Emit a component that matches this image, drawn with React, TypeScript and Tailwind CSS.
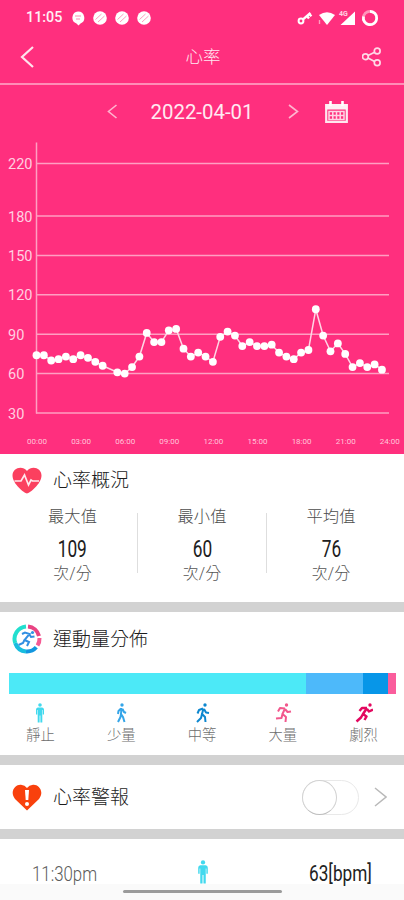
import type { ReactNode } from "react";

interface Level {
  name: string;
  color: string;
  limbs: string;
  head: [number, number];
}

// one reading every half hour, null = no reading
const READINGS: (number | null)[] = [
  74, 74, 70, 71, 73, 71, 74, 72, 69, 66, null, 61, 60, 65, 73, 91, 84, 84, 93,
  94, 79, 73, 76, 73, 69, 88, 92, 89, 81, 84, 81, 81, 82, 76, 73, 71, 76, 78,
  109, 89, 77, 83, 75, 65, 68, 65, 67, 63,
];

const TICKS = [220, 180, 150, 120, 90, 60, 30];

const HOURS = [
  "00:00",
  "03:00",
  "06:00",
  "09:00",
  "12:00",
  "15:00",
  "18:00",
  "21:00",
  "24:00",
];

const STATS = [
  { name: "最大值", value: 109 },
  { name: "最小值", value: 60 },
  { name: "平均值", value: 76 },
];

const LEVELS: Level[] = [
  {
    name: "少量",
    color: "#35a5e8",
    head: [10, 2],
    limbs: "M9.5 5 L9 11 L11 14 L12.5 19 M9 11 L8.5 14 L6 19 M9 5.5 L6.5 8 L6 11 M10.5 6 L12 9 L14 10",
  },
  {
    name: "中等",
    color: "#0d87cf",
    head: [12, 2],
    limbs: "M10.5 5.5 L9 11 L12 14 L12.5 19 M9 11 L8 15 L4 19 M10 5.5 L6 7 L4.5 10.5 M11 6 L13 9.5 L16 10",
  },
  {
    name: "大量",
    color: "#f2588d",
    head: [12.5, 2],
    limbs: "M11 5.5 L8.5 11 L12 14 L11.5 19 M8.5 11 L7.5 15 L2 15.5 M11 5.5 L6 5 L4 8.5 M11 6 L13.5 9 L17 8.5",
  },
  {
    name: "劇烈",
    color: "#e3085f",
    head: [15, 2],
    limbs: "M12 5 L8 11 L11.5 13.5 L9.5 17 M8 11 L6 14.5 L1.5 18.5 M12 5 L7 5 L4.5 8 M12 6 L14 8.5 L18 6.5",
  },
];

const chartX = (slot: number) => 36.5 + slot * 7.35;
const chartY = (bpm: number) => 328 - (bpm - 30) * 1.313;

function StandingIcon({ className }: { className: string }) {
  return (
    <svg viewBox="0 0 10 20" className={className} fill="#42d9ee">
      <circle cx="5" cy="2" r="1.8" />
      <path d="M2.8 4.4 H7.2 Q9 4.6 9 6.5 V11.5 H7.8 V7 H7.3 V19.5 H5.4 V12.5 H4.6 V19.5 H2.7 V7 H2.2 V11.5 H1 V6.5 Q1 4.6 2.8 4.4 Z" />
    </svg>
  );
}

function MovingIcon({ level }: { level: Level }) {
  return (
    <svg viewBox="0 0 18 20" className="h-5 w-[18px]">
      <circle cx={level.head[0]} cy={level.head[1]} r="1.7" fill={level.color} />
      <path
        d={level.limbs}
        fill="none"
        stroke={level.color}
        strokeWidth={level.name === "劇烈" ? 2.5 : 2}
        strokeLinejoin="round"
      />
    </svg>
  );
}

function StatusBar() {
  return (
    <div className="flex h-9 items-center justify-between pl-[26px] pr-[25px]">
      <div className="flex items-center gap-2">
        <span className="w-[37px] whitespace-nowrap text-[14.3px] font-medium">11:05</span>
        <svg viewBox="0 0 14 15" className="h-[15px] w-[14px]">
          <path d="M7 .5 a6.2 6.2 0 0 1 2.5 11.9 L7.5 14.5 5.5 12.5 A6.2 6.2 0 0 1 7 .5Z" fill="#fff" />
          <path d="M4 5h6M5 8h4" stroke="#ff8ab2" strokeWidth="1" />
        </svg>
        {[0, 1, 2].map((n) => (
          <svg key={n} viewBox="0 0 14 14" className="h-[14px] w-[14px]">
            <circle cx="7" cy="7" r="6.8" fill="#fff" />
            <path d="M2.5 8.5 8.5 3M5 11 11.5 5" stroke="#ff9cc0" strokeWidth="1" />
          </svg>
        ))}
      </div>
      <svg viewBox="0 0 82 18" className="h-[18px] w-[82px]" fill="#fff">
        <circle cx="4" cy="12" r="2.4" fill="none" stroke="#fff" strokeWidth="2" />
        <path d="M6 10.3 13.5 4M10 7l2 2.6M12.5 5l1.8 2.4" stroke="#fff" strokeWidth="2.4" />
        <path d="M22 6 Q30 .5 38 6 L30 16Z" />
        <path d="M22.5 11v4" stroke="#ff9dbe" strokeWidth="1.4" />
        <path d="M58 2.5V16H43.5Z" />
        <text x="42" y="7" fontSize="7" fontWeight="700" fill="#ffd3e2">4G</text>
        <circle cx="73" cy="9" r="6.7" fill="none" stroke="#ff94ba" strokeWidth="2.7" />
        <path d="M73 2.3 A6.7 6.7 0 1 1 66.5 7.5" fill="none" stroke="#fff" strokeWidth="2.7" />
      </svg>
    </div>
  );
}

function TitleBar() {
  return (
    <div className="flex h-[47px] items-center justify-between pb-[5px] pl-5 pr-[22px]">
      <svg viewBox="0 0 15 22" className="h-[22px] w-[15px]">
        <path d="M13 1 2 11 13 21" fill="none" stroke="#ffe3ed" strokeWidth="2.2" />
      </svg>
      <h1 className="pl-[9px] text-[17.5px] font-light text-[#ffe9f1]">心率</h1>
      <svg viewBox="0 0 20 20" className="h-5 w-5" fill="none" stroke="#ffd9e7" strokeWidth="1.7">
        <circle cx="3.4" cy="9.7" r="2.9" />
        <circle cx="15.2" cy="4" r="2.9" />
        <circle cx="15.2" cy="15.8" r="2.9" />
        <path d="M6 8.5 12.6 5.2M6 11 12.6 14.5" />
      </svg>
    </div>
  );
}

function DatePicker() {
  return (
    <div className="flex h-[53px] items-center pl-[107px]">
      <svg viewBox="0 0 11 15" className="h-[15px] w-[11px]">
        <path d="M9.5 1 1.5 7.5 9.5 14" fill="none" stroke="#ffb5cf" strokeWidth="1.6" />
      </svg>
      <span className="w-[170px] pt-px pr-[2px] text-center text-[20.4px] text-[#ffeaf2]">2022-04-01</span>
      <svg viewBox="0 0 11 15" className="h-[15px] w-[11px]">
        <path d="M1 1 9.5 7.5 1 14" fill="none" stroke="#ffb5cf" strokeWidth="1.6" />
      </svg>
      <svg viewBox="0 0 23 22" className="ml-[26px] h-[22px] w-[23px]">
        <path d="M1.2 4h20.6v16.8H1.2z" fill="none" stroke="#ffe6ef" strokeWidth="2.2" />
        <path d="M.5 3h22v5.5H.5z" fill="#fff0f5" />
        <path d="M5.5 0v5M17.5 0v5" stroke="#fff" strokeWidth="2.6" />
        <path d="M4 10.5h15v8H4zM4 14.5h15M7.8 10.5v8M11.5 10.5v8M15.2 10.5v8" fill="none" stroke="#ffd5e4" strokeWidth="1.5" />
      </svg>
    </div>
  );
}

function HeartChart() {
  const points = READINGS.flatMap((bpm, slot) =>
    bpm === null ? [] : [{ x: chartX(slot), y: chartY(bpm) }],
  );

  return (
    <svg viewBox="0 53 404 316" className="h-[316px] w-[404px]">
      <g stroke="#ff9fc2" strokeWidth="1.5">
        <path d="M36.5 57.5V328.5" />
        {TICKS.map((bpm) => (
          <path key={bpm} d={`M36 ${chartY(bpm)}H389`} />
        ))}
      </g>
      <g fontSize="14.5" fill="#ffd0e1">
        {TICKS.map((bpm) => (
          <text key={bpm} x="8" y={chartY(bpm) + 5.5}>
            {bpm}
          </text>
        ))}
      </g>
      <polyline
        points={points.map((p) => `${p.x},${p.y}`).join(" ")}
        fill="none"
        stroke="#ffd6e5"
        strokeWidth="1.5"
      />
      {points.map((p) => (
        <circle key={p.x} cx={p.x} cy={p.y} r="3.9" fill="#fff" />
      ))}
      <g fontSize="8" fill="#ffc6da" textAnchor="middle">
        {HOURS.map((hour, i) => (
          <text key={hour} x={37 + i * 44.1} y="359">
            {hour}
          </text>
        ))}
      </g>
    </svg>
  );
}

function SectionTitle({ icon, children }: { icon: ReactNode; children: ReactNode }) {
  return (
    <div className="flex items-center gap-[11px] pl-3">
      {icon}
      <h2 className="pt-px text-[19px] font-light leading-6 text-[#1c1c1c]">{children}</h2>
    </div>
  );
}

function Summary() {
  return (
    <section className="h-[148px] pt-[13px]">
      <SectionTitle
        icon={
          <svg viewBox="0 0 30 27" className="h-[27px] w-[30px]">
            <path d="M15 26.5 C12.5 26.2 .5 17 .5 8.5 C.5 .5 10.5 -2 15 4 C19.5 -2 29.5 .5 29.5 8.5 C29.5 17 17.5 26.2 15 26.5Z" fill="#fb405f" />
            <path d="M2.5 14 H9 L12.5 8 L16.5 18 L19 13 L20.5 14 H27" fill="none" stroke="#ffe9ed" strokeWidth="1.7" />
          </svg>
        }
      >
        心率概況
      </SectionTitle>
      <div className="mt-[10px] flex pl-2 pr-[9px]">
        {STATS.map((stat, i) => (
          <div key={stat.name} className="flex flex-1">
            {i > 0 && <div className="mt-[9px] h-[60px] w-px bg-[#dedede]" />}
            <div className="flex flex-1 flex-col items-center">
              <span className="text-[16.3px] font-light leading-[26px] text-[#4c4c4c]">{stat.name}</span>
              <span className="mt-[5px] scale-x-[0.72] text-[24px] leading-7 text-[#202020]">{stat.value}</span>
              <span className="text-[16px] font-light leading-[21px] text-[#555]">次/分</span>
            </div>
          </div>
        ))}
      </div>
    </section>
  );
}

function Distribution() {
  return (
    <section className="h-[143px] pt-[12px]">
      <SectionTitle
        icon={
          <svg viewBox="0 0 30 30" className="h-[30px] w-[30px]" fill="none">
            <g strokeWidth="4">
              <path d="M14 2.5A12.5 12.5 0 0 0 3.2 19" stroke="#22dfcf" />
              <path d="M3.2 19A12.5 12.5 0 0 0 14 27.5" stroke="#18bddf" />
              <path d="M14 27.5A12.5 12.5 0 0 0 24.3 23.3" stroke="#1296df" />
              <path d="M16 2.5A12.5 12.5 0 0 1 27 12" stroke="#e94383" />
              <path d="M27.5 14A12.5 12.5 0 0 1 25.5 21.5" stroke="#f65a94" />
            </g>
            <circle cx="20.5" cy="8.5" r="1.6" fill="#2f94e4" />
            <path d="M10 10 L13 8.5 L17.5 10 L12.5 16 L17 18 L15 22 M12.5 16 L11 19 L6.5 21 M17.5 10.5 L19 13 L22.5 12.5" stroke="#318fe2" strokeWidth="2" />
          </svg>
        }
      >
        運動量分佈
      </SectionTitle>
      <div className="ml-[9px] mt-[19px] flex h-[21px] w-[387px]">
        <div className="w-[297px] bg-[#4ce9f7]" />
        <div className="w-[57px] bg-[#4db9fa]" />
        <div className="w-[25px] bg-[#0796e8]" />
        <div className="w-2 bg-[#fa5d9c]" />
      </div>
      <div className="mt-[9px] flex">
        <div className="flex flex-1 flex-col items-center">
          <StandingIcon className="h-5 w-[10px]" />
          <span className="mt-[2px] text-[14.3px] font-light leading-5 text-[#6d6d6d]">靜止</span>
        </div>
        {LEVELS.map((level) => (
          <div key={level.name} className="flex flex-1 flex-col items-center">
            <MovingIcon level={level} />
            <span className="mt-[2px] text-[14.3px] font-light leading-5 text-[#6d6d6d]">{level.name}</span>
          </div>
        ))}
      </div>
    </section>
  );
}

function Alarm() {
  return (
    <section className="flex h-16 items-center justify-between pr-[17px]">
      <SectionTitle
        icon={
          <svg viewBox="0 0 30 27" className="h-[27px] w-[30px]">
            <path d="M15 26.5 L3 15 C-3 7 4 0 9 .7 Q13 1 15 4 Q17 1 21 .7 C26 0 33 7 27 15Z" fill="#f9410d" />
            <path d="M13 6h4l-.7 10h-2.6z" fill="#fff" />
            <circle cx="15" cy="20" r="2" fill="#fff" />
          </svg>
        }
      >
        心率警報
      </SectionTitle>
      <div className="flex items-center gap-[15px]">
        <button className="flex h-[35px] w-[57px] items-center rounded-full border border-[#e9e9e9] bg-white">
          <span className="-ml-px size-[35px] rounded-full border border-[#d2d2d2] border-b-[#bdbdbd] bg-white" />
        </button>
        <svg viewBox="0 0 13 20" className="h-5 w-[13px]">
          <path d="M1 1 12 10 1 19" fill="none" stroke="#b9b9b9" strokeWidth="1.5" />
        </svg>
      </div>
    </section>
  );
}

export default function App() {
  return (
    <div className="flex h-[900px] w-[404px] flex-col overflow-hidden bg-white font-['Roboto','Noto_Sans_CJK_TC',sans-serif]">
      <header className="h-[454px] bg-[#ff2f7e] text-[#fff0f5]">
        <StatusBar />
        <TitleBar />
        <div className="h-[2px] bg-[#ff8db7]" />
        <DatePicker />
        <HeartChart />
      </header>
      <Summary />
      <div className="h-[10px] bg-[#d2d2d2]" />
      <Distribution />
      <div className="h-[10px] bg-[#d2d2d2]" />
      <Alarm />
      <div className="h-[10px] bg-[#d2d2d2]" />
      <div className="flex h-[45px] items-end justify-between pl-[32px] pr-[31px]">
        <span className="w-[66px] whitespace-nowrap text-[20.5px] font-light leading-5 text-[#5c5c5c]">
          <span className="inline-block origin-left scale-x-[0.82]">11:30pm</span>
        </span>
        <StandingIcon className="mr-[2px] h-6 w-3" />
        <span className="w-[64px] whitespace-nowrap text-[21.5px] leading-5 text-[#222]">
          <span className="inline-block origin-left scale-x-[0.8]">63[bpm]</span>
        </span>
      </div>
      <footer className="flex h-4 justify-center bg-[#fafafa] pt-[6px]">
        <div className="h-[3px] w-[159px] rounded-full bg-[#9b9b9b]" />
      </footer>
    </div>
  );
}
